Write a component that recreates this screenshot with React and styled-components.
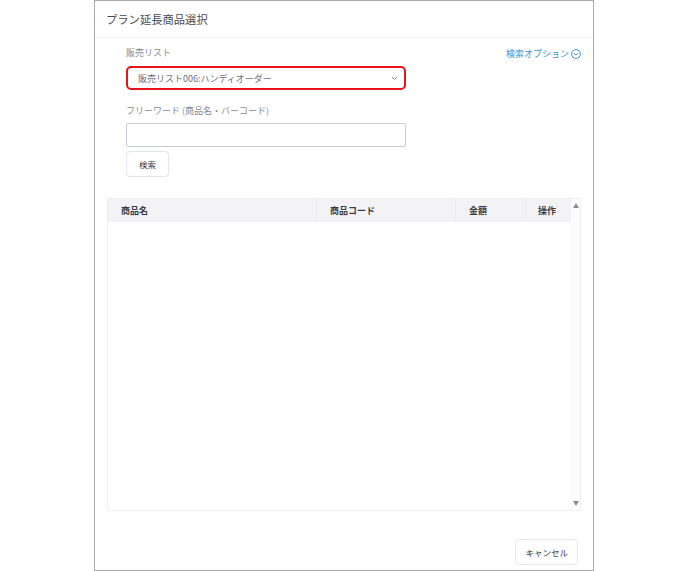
import React from 'react'
import styled, { createGlobalStyle } from 'styled-components'

const GlobalStyle = createGlobalStyle`
  body {
    margin: 0;
    background: #fff;
    font-family: "Noto Sans CJK JP", "Noto Sans", sans-serif;
  }
`

const Page = styled.div`
  width: 688px;
  height: 571px;
  display: flex;
  justify-content: flex-start;
`
const Dialog = styled.div`
  margin-left: 94px;
  width: 500px;
  height: 571px;
  box-sizing: border-box;
  border: 1px solid #a9a9a9;
  display: flex;
  flex-direction: column;
  background: #fff;
`
const Header = styled.div`
  height: 37px;
  box-sizing: border-box;
  padding: 0 11px;
  display: flex;
  align-items: center;
  border-bottom: 1px solid #f2f3f5;
  font-size: 11.3px;
  color: #4a4a52;
`
const Body = styled.div`
  flex: 1;
  padding: 0 12px;
  display: flex;
  flex-direction: column;
`
const FormRow = styled.div`
  display: flex;
  justify-content: space-between;
  align-items: flex-start;
  padding-left: 19px;
  padding-top: 8px;
`
const Fields = styled.div`
  width: 280px;
  display: flex;
  flex-direction: column;
`
const Label = styled.div`
  font-size: 9px;
  line-height: 14px;
  color: #8a8a96;
  margin-top: ${p => p.$top || 0}px;
`
const Select = styled.div`
  margin-top: 6px;
  height: 24px;
  box-sizing: border-box;
  border: 2px solid #e8141b;
  border-radius: 5px;
  display: flex;
  align-items: center;
  justify-content: space-between;
  padding: 0 6px 0 10px;
  font-size: 9px;
  color: #6f6f7d;
`
const Input = styled.div`
  margin-top: 5px;
  height: 24px;
  box-sizing: border-box;
  border: 1px solid #c9ccd6;
  border-radius: 2px;
`
const SmallButton = styled.div`
  height: 26px;
  box-sizing: border-box;
  padding: 0 ${p => p.$pad || 12}px;
  border: 1px solid #e3e6ee;
  border-radius: 4px;
  display: inline-flex;
  align-items: center;
  font-size: 8.5px;
  color: #3c3c44;
  align-self: ${p => p.$align || 'flex-start'};
  margin-top: ${p => p.$top || 0}px;
`
const Link = styled.div`
  display: flex;
  align-items: center;
  gap: 2px;
  color: #3b8fd6;
  font-size: 9px;
  line-height: 14px;
  padding-top: 1px;
`
const Table = styled.div`
  margin-top: 21px;
  height: 313px;
  box-sizing: border-box;
  border: 1px solid #eceef3;
  display: flex;
`
const TableMain = styled.div`
  flex: 1;
  display: flex;
  flex-direction: column;
`
const HeadRow = styled.div`
  display: grid;
  grid-template-columns: 208px 139px 70px 1fr;
  height: 23px;
  background: #f3f3f5;
`
const HeadCell = styled.div`
  display: flex;
  align-items: center;
  padding-left: ${p => p.$pad || 13}px;
  font-size: 9px;
  font-weight: 700;
  color: #3c3c44;
  border-left: ${p => (p.$first ? 'none' : '1px solid #ebecef')};
`
const Scrollbar = styled.div`
  width: 9px;
  background: #fcfcfd;
  display: flex;
  flex-direction: column;
  justify-content: space-between;
  align-items: center;
  padding: 4px 0;
`
const Arrow = styled.div`
  width: 0;
  height: 0;
  border-left: 3.5px solid transparent;
  border-right: 3.5px solid transparent;
  ${p => (p.$down ? 'border-top: 5px solid #8c8c8c;' : 'border-bottom: 5px solid #8c8c8c;')}
`
const Footer = styled.div`
  display: flex;
  justify-content: flex-end;
  padding: 28px 3px 0 0;
`

const Chevron = () => (
  <svg width="7" height="5" viewBox="0 0 7 5" fill="none">
    <path d="M1 1l2.5 2.5L6 1" stroke="#8a8a96" strokeWidth="1" />
  </svg>
)

const CircleChevron = () => (
  <svg width="10" height="10" viewBox="0 0 10 10" fill="none">
    <circle cx="5" cy="5" r="4.4" stroke="#3b8fd6" strokeWidth="1" />
    <path d="M3 4.2l2 2 2-2" stroke="#3b8fd6" strokeWidth="1" />
  </svg>
)

const App = () => {
  return (
    <Page>
      <GlobalStyle />
      <Dialog>
        <Header>プラン延長商品選択</Header>
        <Body>
          <FormRow>
            <Fields>
              <Label>販売リスト</Label>
              <Select>
                <span>販売リスト006:ハンディオーダー</span>
                <Chevron />
              </Select>
              <Label $top={14}>フリーワード (商品名・バーコード)</Label>
              <Input />
              <SmallButton $top={4}>検索</SmallButton>
            </Fields>
            <Link>
              検索オプション
              <CircleChevron />
            </Link>
          </FormRow>
          <Table>
            <TableMain>
              <HeadRow>
                <HeadCell $first>商品名</HeadCell>
                <HeadCell>商品コード</HeadCell>
                <HeadCell>金額</HeadCell>
                <HeadCell $pad={12}>操作</HeadCell>
              </HeadRow>
            </TableMain>
            <Scrollbar>
              <Arrow />
              <Arrow $down />
            </Scrollbar>
          </Table>
          <Footer>
            <SmallButton $align="center" $pad={9}>キャンセル</SmallButton>
          </Footer>
        </Body>
      </Dialog>
    </Page>
  )
}

export default App
